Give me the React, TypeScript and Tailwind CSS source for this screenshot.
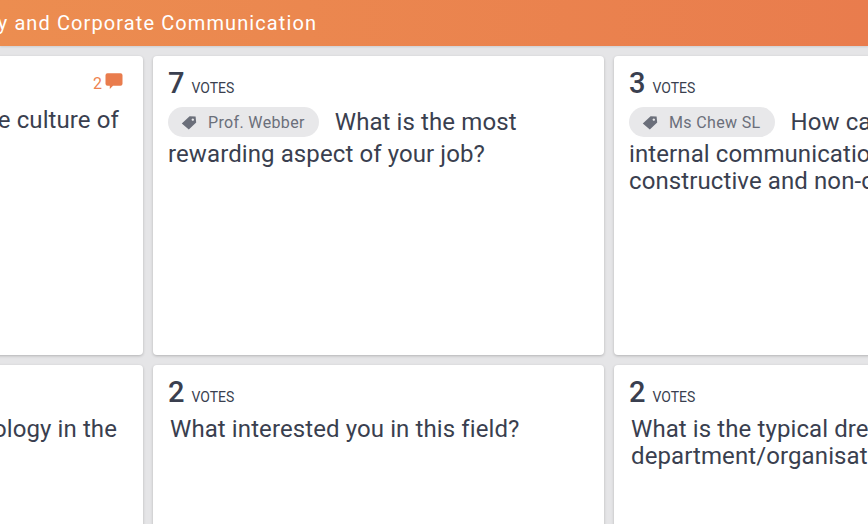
const cardClass = "relative h-[299px] rounded-[4px] bg-white px-[15px] pt-[9px] shadow-[0_1px_3px_rgba(0,0,0,0.22)]";

function Votes({ count }: { count: number }) {
  return (
    <div className="flex h-[36px] items-baseline gap-[7px] text-[#3a3f4f]">
      <span className="text-[29px] font-medium leading-[36px]">{count}</span>
      <span className="text-[14px] leading-none">VOTES</span>
    </div>
  );
}

function Tag({ name }: { name: string }) {
  return (
    <span className="mb-[4px] mr-[16px] inline-flex h-[30px] items-center gap-[11px] rounded-full bg-[#e8e8ea] pl-[13px] pr-[14px] pt-[1px] align-middle text-[16px] leading-none tracking-[0.35px] text-[#6b6f7a]">
      <svg viewBox="0 0 16 14" className="h-[14px] w-[16px]" fill="#6b6f7a">
        <path d="M8.6 0.3 14.6 0.6 15.2 6.4 7.8 13.6 0.8 7.6ZM11.8 2.4a1.2 1.2 0 1 0 .01 0Z" fillRule="evenodd" />
      </svg>
      {name}
    </span>
  );
}

export default function App() {
  return (
    <div className="h-[524px] w-[868px] overflow-hidden bg-[#e5e5e7] font-['Roboto',sans-serif]">
      <header className="h-[46px] overflow-hidden bg-gradient-to-r from-[#ec8d50] to-[#e97c4d] shadow-[0_1px_2px_rgba(0,0,0,0.1)]">
        <div className="-ml-[74px] whitespace-nowrap text-[20px] leading-[46px] tracking-[1.1px] text-white">
          Strategy and Corporate Communication
        </div>
      </header>
      <div className="-ml-[308px] mt-[10px] grid grid-cols-[451px_451px_451px] gap-[10px]">
        <div className={cardClass}>
          <div className="absolute right-[20px] top-[17px] flex items-start gap-[3px] text-[16px] leading-none text-[#ee8350]">
            <span className="pt-[3px]">2</span>
            <svg viewBox="0 0 18 16" className="h-[16px] w-[18px]" fill="#e97c4d">
              <path d="M2.5 0.2H15.5A2 2 0 0 1 17.5 2.2V10.8A2 2 0 0 1 15.5 12.8H8L4.8 16V12.8H2.5A2 2 0 0 1 0.5 10.8V2.2A2 2 0 0 1 2.5 0.2Z" />
            </svg>
          </div>
          <p className="mt-[42px] pr-[9px] text-right text-[24px] leading-[27px] tracking-[0.1px] text-[#3a3f4f]">
            What is the culture of
          </p>
        </div>
        <div className={cardClass}>
          <Votes count={7} />
          <div className="mt-[6px] text-[24px] leading-[27px] tracking-[0.1px] text-[#3a3f4f]">
            <Tag name="Prof. Webber" />
            What is the most rewarding aspect of your job?
          </div>
        </div>
        <div className={cardClass}>
          <Votes count={3} />
          <div className="mt-[6px] text-[24px] leading-[27px] tracking-[0.1px] text-[#3a3f4f]">
            <Tag name="Ms Chew SL" />
            How can we ensure internal communication remains constructive and non-confrontational?
          </div>
        </div>
        <div className={cardClass}>
          <p className="mt-[42px] pr-[11px] text-right text-[24px] leading-[27px] tracking-[0.1px] text-[#3a3f4f]">
            technology in the
          </p>
        </div>
        <div className={cardClass}>
          <Votes count={2} />
          <p className="mt-[6px] pl-[2px] text-[24px] leading-[27px] tracking-[0.1px] text-[#3a3f4f]">What interested you in this field?</p>
        </div>
        <div className={cardClass}>
          <Votes count={2} />
          <p className="mt-[6px] pl-[2px] text-[24px] leading-[27px] tracking-[0.1px] text-[#3a3f4f]">
            What is the typical dress code in your department/organisation?
          </p>
        </div>
      </div>
    </div>
  );
}
